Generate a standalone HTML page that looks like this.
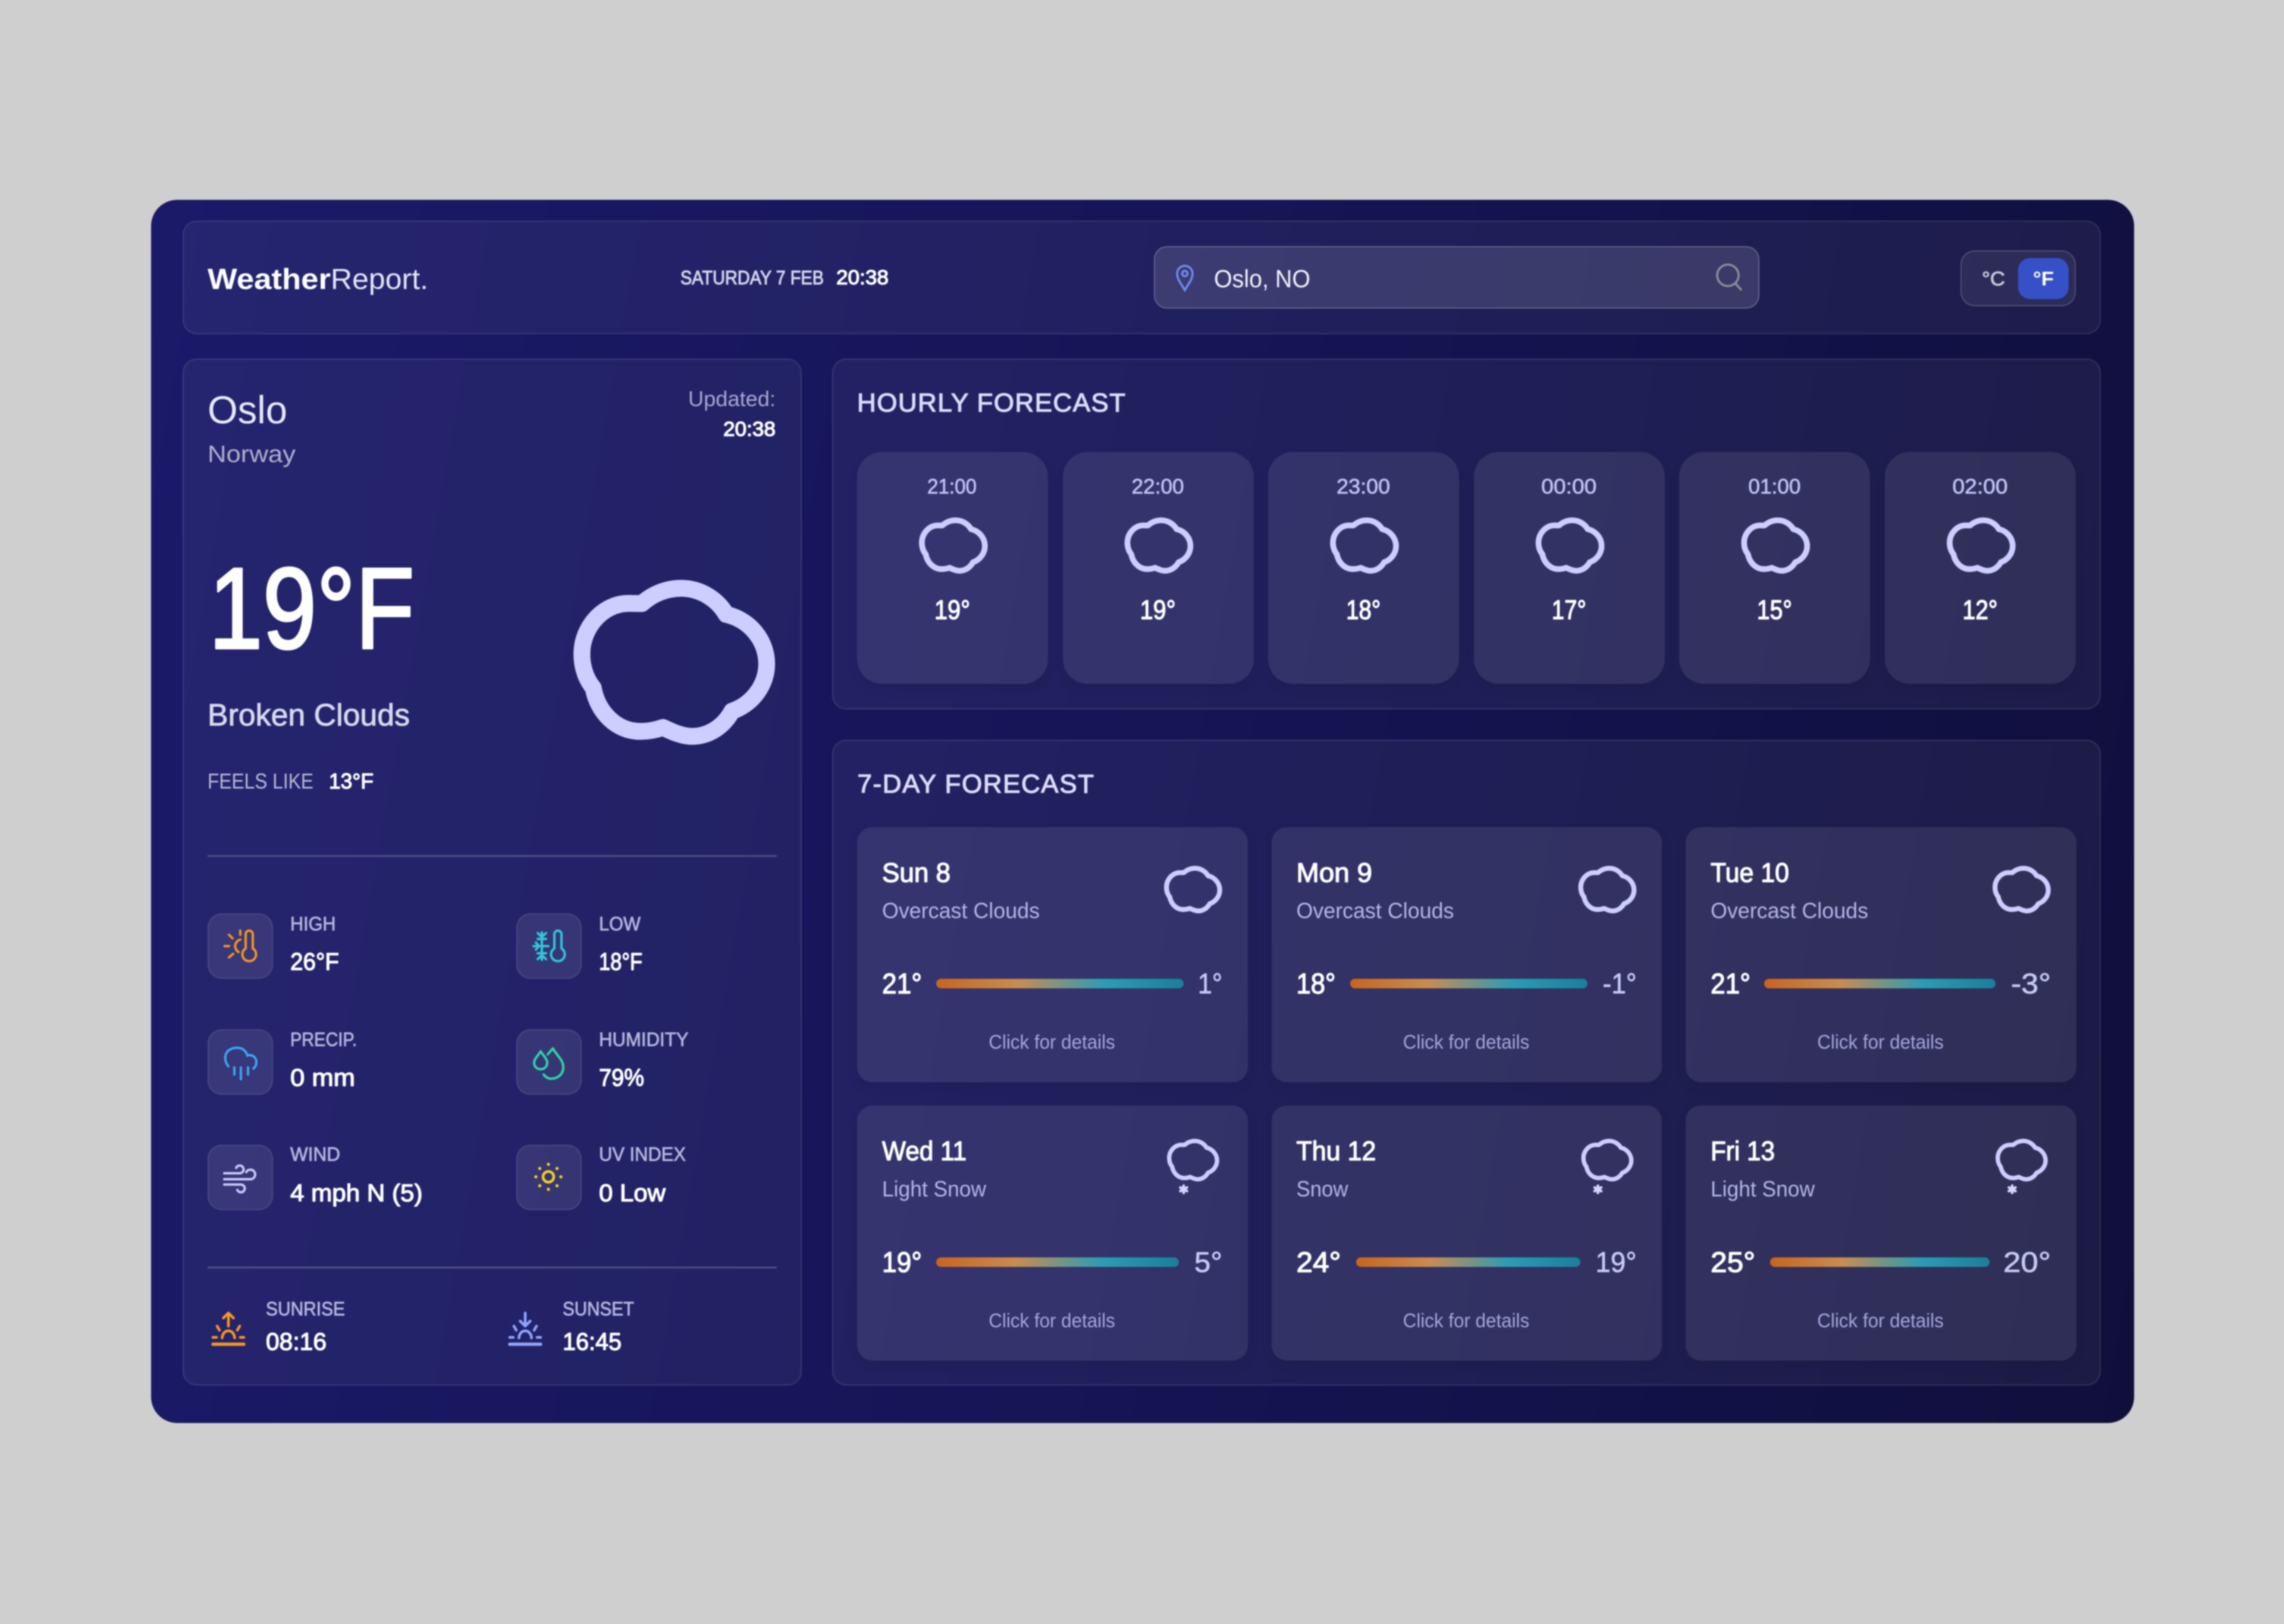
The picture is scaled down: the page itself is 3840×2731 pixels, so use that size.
<!DOCTYPE html>
<html lang="en"><head><meta charset="utf-8"><title>WeatherReport</title>
<style>
html,body{margin:0;padding:0;background:#cfcfcf;width:3840px;height:2731px;overflow:hidden}
#w{position:absolute;left:0;top:0;width:3840px;height:2731px;filter:blur(1px)}
.b{position:absolute;box-sizing:border-box}
#f{left:254px;top:336px;width:3334px;height:2057px;border-radius:44px;background:linear-gradient(100deg,#1a1a6a 0%,#161556 50%,#100f3c 100%)}
.c{background:rgba(255,255,255,.05);border:2px solid rgba(255,255,255,.1);border-radius:24px}
.t{background:rgba(255,255,255,.088);box-shadow:0 8px 20px rgba(0,0,0,.08)}
.h{top:760px;width:321px;height:390px;border-radius:42px}
.d{width:656.5px;height:429px;border-radius:26px}
.r1{top:1391px}.r2{top:1859px}
.i{width:110px;height:110px;border-radius:24px;background:rgba(255,255,255,.09);border:2px solid rgba(255,255,255,.09)}
svg{position:absolute;left:0;top:0}
text{font-family:"Liberation Sans",sans-serif}
.v{fill:#fff;stroke:#fff;stroke-width:1.4px;stroke-linejoin:round}
.k{fill:#b3b5de;font-size:32px;stroke:#b3b5de;stroke-width:.9px}
.vv{font-size:41px}
.nm{font-size:45px}
.ds{font-size:37px;fill:#b3b6e8}
.tp{font-size:48px}
.lo{font-size:48px;fill:#c6c9f5;stroke:#c6c9f5;stroke-width:.8px}
.cl{font-size:33px;fill:#a3a6dc}
.tm{font-size:35px;fill:#bfc2f5;stroke:#bfc2f5;stroke-width:.8px}
.ht{font-size:45px}
.hd{font-size:44px;fill:#dcdcfa;stroke:#dcdcfa;stroke-width:1.3px}
</style></head><body><div id="w">
<div class="b" id="f"></div>
<div class="b c" style="left:307px;top:371px;width:3225px;height:191px"></div>
<div class="b c" style="left:307px;top:603px;width:1041px;height:1727px"></div>
<div class="b c" style="left:1399px;top:603px;width:2133px;height:590px"></div>
<div class="b c" style="left:1399px;top:1244px;width:2133px;height:1086px"></div>
<div class="b" style="left:1940px;top:414px;width:1018px;height:105px;border-radius:22px;background:rgba(255,255,255,.12);border:2px solid rgba(255,255,255,.2)"></div>
<div class="b" style="left:3296px;top:421px;width:194px;height:94px;border-radius:24px;background:rgba(255,255,255,.07);border:2px solid rgba(255,255,255,.16)"></div>
<div class="b" style="left:3393px;top:434px;width:85px;height:69px;border-radius:20px;background:#3650c8"></div>
<div class="b t h" style="left:1441px"></div><div class="b t h" style="left:1786.6px"></div><div class="b t h" style="left:2132.2px"></div><div class="b t h" style="left:2477.8px"></div><div class="b t h" style="left:2823.4px"></div><div class="b t h" style="left:3169px"></div>
<div class="b t d r1" style="left:1441px"></div><div class="b t d r1" style="left:2137.5px"></div><div class="b t d r1" style="left:2834px"></div>
<div class="b t d r2" style="left:1441px"></div><div class="b t d r2" style="left:2137.5px"></div><div class="b t d r2" style="left:2834px"></div>
<div class="b" style="left:349px;top:1438px;width:957px;height:2.5px;background:rgba(255,255,255,.2)"></div>
<div class="b" style="left:349px;top:2130px;width:957px;height:2.5px;background:rgba(255,255,255,.2)"></div>
<div class="b i" style="left:349px;top:1536px"></div><div class="b i" style="left:868px;top:1536px"></div>
<div class="b i" style="left:349px;top:1731px"></div><div class="b i" style="left:868px;top:1731px"></div>
<div class="b i" style="left:349px;top:1925px"></div><div class="b i" style="left:868px;top:1925px"></div>

<svg width="3840" height="2731" viewBox="0 0 3840 2731" xmlns="http://www.w3.org/2000/svg">
<defs>
<linearGradient id="g" x1="0" y1="0" x2="1" y2="0"><stop offset="0" stop-color="#c8651f"/><stop offset=".33" stop-color="#c98c4f"/><stop offset=".68" stop-color="#2b9db3"/><stop offset="1" stop-color="#1b7f9a"/></linearGradient>
<path id="cl" fill="none" stroke="#cdceff" stroke-width="85" stroke-linejoin="round" d="M418 225C470 178 540 148 615 148C715 148 800 205 843 280C960 305 1047 410 1047 530C1047 640 970 735 872 768C830 845 755 895 670 895C620 895 570 872 524 850C490 862 450 870 410 870C290 870 195 775 172 650C135 605 115 545 115 480C115 340 225 224 350 224C372 224 395 225 418 225Z"/>
<g id="st" stroke="#d5d6ff" stroke-width="4.600" stroke-linecap="round"><path d="M0-6V6M-5.500-3L5.500 3M-5.500 3L5.500-3"/></g>
</defs>

<!-- header -->
<text x="349" y="486" font-size="49" font-weight="700" fill="#fff" textLength="207" lengthAdjust="spacingAndGlyphs">Weather</text>
<text x="556" y="486" font-size="49" fill="#e4e5f8" textLength="164" lengthAdjust="spacingAndGlyphs">Report.</text>
<text x="1144" y="478" fill="#d2d3ea" stroke="#d2d3ea" stroke-width="1.2" font-size="32" textLength="241" lengthAdjust="spacingAndGlyphs">SATURDAY 7 FEB</text>
<text x="1406" y="478" font-size="34" class="v" textLength="88" lengthAdjust="spacingAndGlyphs">20:38</text>
<text x="2041" y="483" font-size="42" fill="#f2f2fa" textLength="162" lengthAdjust="spacingAndGlyphs">Oslo, NO</text>
<text x="3332" y="480" font-size="33" fill="#c9c9d6" stroke="#c9c9d6" stroke-width="1" textLength="39" lengthAdjust="spacingAndGlyphs">°C</text>
<text x="3418" y="480" font-size="33" font-weight="700" fill="#fff" textLength="35" lengthAdjust="spacingAndGlyphs">°F</text>
<path d="M1992 488C1986 477 1979 470 1979 460a13 13 0 0 1 26 0C2005 470 1998 477 1992 488Z" fill="none" stroke="#6e8cf5" stroke-width="3.500"/><circle cx="1992" cy="460" r="4.500" fill="none" stroke="#6e8cf5" stroke-width="3.500"/>
<circle cx="2905" cy="463" r="18" fill="none" stroke="#8d8d98" stroke-width="3.600"/><path d="M2918 477L2927 487" stroke="#8d8d98" stroke-width="3.600" stroke-linecap="round"/>

<!-- left card -->
<text x="349" y="712" font-size="66" fill="#e8e9fb" textLength="134" lengthAdjust="spacingAndGlyphs">Oslo</text>
<text x="349" y="777" font-size="40" fill="#b0b1cf" textLength="148" lengthAdjust="spacingAndGlyphs">Norway</text>
<text x="1304" y="683" font-size="36" fill="#a9a9cc" text-anchor="end" textLength="147" lengthAdjust="spacingAndGlyphs">Updated:</text>
<text x="1304" y="733" font-size="34" class="v" text-anchor="end" textLength="88" lengthAdjust="spacingAndGlyphs">20:38</text>
<text x="351" y="1090" font-size="194" fill="#fff" stroke="#fff" stroke-width="4" stroke-linejoin="round" textLength="346" lengthAdjust="spacingAndGlyphs">19°F</text>
<text x="349" y="1220" font-size="52" fill="#d8d9ee" stroke="#d8d9ee" stroke-width="1" textLength="340" lengthAdjust="spacingAndGlyphs">Broken Clouds</text>
<text x="349" y="1326" font-size="36" fill="#b8b9d6" textLength="178" lengthAdjust="spacingAndGlyphs">FEELS LIKE</text>
<text x="553" y="1326" font-size="36" class="v" textLength="75" lengthAdjust="spacingAndGlyphs">13°F</text>
<use href="#cl" transform="translate(940 940) scale(.3333)"/>

<text x="488" y="1564.5" class="k" textLength="76.5" lengthAdjust="spacingAndGlyphs">HIGH</text>
<text x="488" y="1631" class="v vv" textLength="82" lengthAdjust="spacingAndGlyphs">26°F</text>
<text x="1007" y="1564.5" class="k" textLength="70" lengthAdjust="spacingAndGlyphs">LOW</text>
<text x="1007" y="1631" class="v vv" textLength="73" lengthAdjust="spacingAndGlyphs">18°F</text>
<text x="488" y="1759" class="k" textLength="112" lengthAdjust="spacingAndGlyphs">PRECIP.</text>
<text x="488" y="1826" class="v vv" textLength="109" lengthAdjust="spacingAndGlyphs">0 mm</text>
<text x="1007" y="1759" class="k" textLength="150.5" lengthAdjust="spacingAndGlyphs">HUMIDITY</text>
<text x="1007" y="1826" class="v vv" textLength="76" lengthAdjust="spacingAndGlyphs">79%</text>
<text x="488" y="1952" class="k" textLength="84" lengthAdjust="spacingAndGlyphs">WIND</text>
<text x="488" y="2020" class="v vv" textLength="222.5" lengthAdjust="spacingAndGlyphs">4 mph N (5)</text>
<text x="1007" y="1952" class="k" textLength="146" lengthAdjust="spacingAndGlyphs">UV INDEX</text>
<text x="1007" y="2020" class="v vv" textLength="112" lengthAdjust="spacingAndGlyphs">0 Low</text>
<text x="447" y="2212" class="k" textLength="133" lengthAdjust="spacingAndGlyphs">SUNRISE</text>
<text x="447" y="2270" class="v vv" textLength="102" lengthAdjust="spacingAndGlyphs">08:16</text>
<text x="946" y="2212" class="k" textLength="120" lengthAdjust="spacingAndGlyphs">SUNSET</text>
<text x="946" y="2270" class="v vv" textLength="99" lengthAdjust="spacingAndGlyphs">16:45</text>

<!-- high icon -->
<g fill="none" stroke="#f7941d" stroke-width="4" stroke-linecap="round">
<path d="M413 1595V1571a6 6 0 0 1 12 0V1595a11.500 11.500 0 1 1-12 0Z"/>
<path d="M404 1565V1572M385 1572L391 1578M377.500 1591H385M385 1610L392 1604M404 1580A11.500 11.500 0 0 0 401 1601"/>
</g>
<!-- low icon -->
<g fill="none" stroke="#2fc8dc" stroke-width="4" stroke-linecap="round" stroke-linejoin="round">
<path d="M932 1595V1571a6 6 0 0 1 12 0V1595a11.500 11.500 0 1 1-12 0Z"/>
<path d="M911 1568V1614M897 1591H922M904 1569L911 1576L918 1569M904 1613L911 1606L918 1613M901 1585L906 1591L901 1597M904 1579L918 1579M904 1603L918 1603"/>
</g>
<!-- precip -->
<g fill="none" stroke="#3aa7f5" stroke-width="4" stroke-linecap="round">
<path d="M384 1793C375 1783 376 1762 399 1762C408 1762 414 1768 416 1775C425 1772 432 1780 431 1787C431 1791 429 1795 426 1797"/>
<path d="M394 1795V1807M405 1795V1815M417 1795V1807"/>
</g>
<!-- humidity -->
<g fill="none" stroke="#2fd6a5" stroke-width="4" stroke-linecap="round" stroke-linejoin="round">
<path d="M909 1768C904 1776 898 1781 898 1787C898 1794 903 1798 909 1798C915 1798 920 1794 920 1787C920 1781 914 1776 909 1768Z"/>
<path d="M921 1773L929.500 1763C936 1775 947 1782 947 1795C947 1806 938 1814 927 1814C921 1814 917 1811 914 1807"/>
</g>
<!-- wind -->
<g fill="none" stroke="#c8cbf8" stroke-width="4" stroke-linecap="round">
<path d="M377 1973H403a6.500 6.500 0 1 0-6-9"/>
<path d="M377 1983H421a8 8 0 1 0-7-12"/>
<path d="M377 1992H405a6.500 6.500 0 1 1-6 9"/>
</g>
<!-- uv -->
<circle cx="922" cy="1979" r="9" fill="none" stroke="#f5d020" stroke-width="4.500"/>
<g fill="#f5d020"><circle cx="922" cy="1958" r="2.700"/><circle cx="922" cy="2000" r="2.700"/><circle cx="901" cy="1979" r="2.700"/><circle cx="943" cy="1979" r="2.700"/><circle cx="907.500" cy="1965" r="2.700"/><circle cx="936.500" cy="1965" r="2.700"/><circle cx="907.500" cy="1994" r="2.700"/><circle cx="936.500" cy="1994" r="2.700"/></g>
<!-- sunrise -->
<g fill="none" stroke="#f7981f" stroke-width="4.500" stroke-linecap="round" stroke-linejoin="round">
<path d="M384 2230V2208M375.500 2216.500L384 2208L392.500 2216.500"/>
<path d="M365 2230L369 2237M403 2230L399 2237M358 2249H364M404 2249H410M373.500 2250C374 2242 379 2238 384 2238C389 2238 394 2242 394.500 2250"/>
<path d="M358 2260.500H410" stroke-width="5.500"/>
</g>
<!-- sunset -->
<g fill="none" stroke="#8ea4ff" stroke-width="4.500" stroke-linecap="round" stroke-linejoin="round">
<path d="M883 2208V2230M874.500 2221.500L883 2230L891.500 2221.500"/>
<path d="M864 2230L868 2237M902 2230L898 2237M857 2249H863M903 2249H909M872.500 2250C873 2242 878 2238 883 2238C888 2238 893 2242 893.500 2250"/>
<path d="M857 2260.500H909" stroke-width="5.500"/>
</g>

<!-- hourly -->
<text x="1441" y="692" class="hd" textLength="451" lengthAdjust="spacing">HOURLY FORECAST</text>
<text x="1600.500" y="830" class="tm" text-anchor="middle" textLength="83" lengthAdjust="spacingAndGlyphs">21:00</text>
<text x="1946.600" y="830" class="tm" text-anchor="middle" textLength="88" lengthAdjust="spacingAndGlyphs">22:00</text>
<text x="2292.200" y="830" class="tm" text-anchor="middle" textLength="90" lengthAdjust="spacingAndGlyphs">23:00</text>
<text x="2637.800" y="830" class="tm" text-anchor="middle" textLength="93" lengthAdjust="spacingAndGlyphs">00:00</text>
<text x="2983.400" y="830" class="tm" text-anchor="middle" textLength="88" lengthAdjust="spacingAndGlyphs">01:00</text>
<text x="3329" y="830" class="tm" text-anchor="middle" textLength="93" lengthAdjust="spacingAndGlyphs">02:00</text>
<use href="#cl" transform="translate(1536.800 858.100) scale(.1137)"/>
<use href="#cl" transform="translate(1882.400 858.100) scale(.1137)"/>
<use href="#cl" transform="translate(2228 858.100) scale(.1137)"/>
<use href="#cl" transform="translate(2573.600 858.100) scale(.1137)"/>
<use href="#cl" transform="translate(2919.200 858.100) scale(.1137)"/>
<use href="#cl" transform="translate(3264.800 858.100) scale(.1137)"/>
<text x="1601" y="1041" class="v ht" text-anchor="middle" textLength="60" lengthAdjust="spacingAndGlyphs">19°</text>
<text x="1946.600" y="1041" class="v ht" text-anchor="middle" textLength="60" lengthAdjust="spacingAndGlyphs">19°</text>
<text x="2292.200" y="1041" class="v ht" text-anchor="middle" textLength="58" lengthAdjust="spacingAndGlyphs">18°</text>
<text x="2637.800" y="1041" class="v ht" text-anchor="middle" textLength="58" lengthAdjust="spacingAndGlyphs">17°</text>
<text x="2983.400" y="1041" class="v ht" text-anchor="middle" textLength="59" lengthAdjust="spacingAndGlyphs">15°</text>
<text x="3329" y="1041" class="v ht" text-anchor="middle" textLength="59" lengthAdjust="spacingAndGlyphs">12°</text>

<!-- 7-day -->
<text x="1441.500" y="1333" class="hd" textLength="397.500" lengthAdjust="spacing">7-DAY FORECAST</text>

<text x="1483" y="1483" class="v nm" textLength="115" lengthAdjust="spacingAndGlyphs">Sun 8</text>
<text x="1483" y="1544" class="ds" textLength="265" lengthAdjust="spacingAndGlyphs">Overcast Clouds</text>
<text x="1483" y="1670.500" class="v tp" textLength="67" lengthAdjust="spacingAndGlyphs">21°</text>
<rect x="1574" y="1646" width="416" height="16" rx="8" fill="url(#g)"/>
<text x="2055" y="1670.500" class="lo" text-anchor="end" textLength="41" lengthAdjust="spacingAndGlyphs">1°</text>
<text x="1768.500" y="1763.500" class="cl" text-anchor="middle" textLength="212.500" lengthAdjust="spacingAndGlyphs">Click for details</text>
<use href="#cl" transform="translate(1950.100 1445.900) scale(.0961)"/>

<text x="2179.500" y="1483" class="v nm" textLength="127.500" lengthAdjust="spacingAndGlyphs">Mon 9</text>
<text x="2179.500" y="1544" class="ds" textLength="265" lengthAdjust="spacingAndGlyphs">Overcast Clouds</text>
<text x="2179.500" y="1670.500" class="v tp" textLength="66" lengthAdjust="spacingAndGlyphs">18°</text>
<rect x="2270" y="1646" width="399" height="16" rx="8" fill="url(#g)"/>
<text x="2751.500" y="1670.500" class="lo" text-anchor="end" textLength="57" lengthAdjust="spacingAndGlyphs">-1°</text>
<text x="2465" y="1763.500" class="cl" text-anchor="middle" textLength="212.500" lengthAdjust="spacingAndGlyphs">Click for details</text>
<use href="#cl" transform="translate(2646.600 1445.900) scale(.0961)"/>

<text x="2876" y="1483" class="v nm" textLength="132" lengthAdjust="spacingAndGlyphs">Tue 10</text>
<text x="2876" y="1544" class="ds" textLength="265" lengthAdjust="spacingAndGlyphs">Overcast Clouds</text>
<text x="2876" y="1670.500" class="v tp" textLength="67" lengthAdjust="spacingAndGlyphs">21°</text>
<rect x="2966" y="1646" width="389" height="16" rx="8" fill="url(#g)"/>
<text x="3448" y="1670.500" class="lo" text-anchor="end" textLength="67" lengthAdjust="spacingAndGlyphs">-3°</text>
<text x="3161.500" y="1763.500" class="cl" text-anchor="middle" textLength="212.500" lengthAdjust="spacingAndGlyphs">Click for details</text>
<use href="#cl" transform="translate(3343.100 1445.900) scale(.0961)"/>

<text x="1483" y="1951" class="v nm" textLength="142" lengthAdjust="spacingAndGlyphs">Wed 11</text>
<text x="1483" y="2012" class="ds" textLength="175" lengthAdjust="spacingAndGlyphs">Light Snow</text>
<text x="1483" y="2139" class="v tp" textLength="67" lengthAdjust="spacingAndGlyphs">19°</text>
<rect x="1574" y="2114.500" width="408" height="16" rx="8" fill="url(#g)"/>
<text x="2055" y="2139" class="lo" text-anchor="end" textLength="47" lengthAdjust="spacingAndGlyphs">5°</text>
<text x="1768.500" y="2232" class="cl" text-anchor="middle" textLength="212.500" lengthAdjust="spacingAndGlyphs">Click for details</text>
<use href="#cl" transform="translate(1955.800 1905.900) scale(.0863)"/>
<use href="#st" transform="translate(1990 2000)"/>

<text x="2179.500" y="1951" class="v nm" textLength="134" lengthAdjust="spacingAndGlyphs">Thu 12</text>
<text x="2179.500" y="2012" class="ds" textLength="87" lengthAdjust="spacingAndGlyphs">Snow</text>
<text x="2179.500" y="2139" class="v tp" textLength="75" lengthAdjust="spacingAndGlyphs">24°</text>
<rect x="2280" y="2114.500" width="377" height="16" rx="8" fill="url(#g)"/>
<text x="2751.500" y="2139" class="lo" text-anchor="end" textLength="69" lengthAdjust="spacingAndGlyphs">19°</text>
<text x="2465" y="2232" class="cl" text-anchor="middle" textLength="212.500" lengthAdjust="spacingAndGlyphs">Click for details</text>
<use href="#cl" transform="translate(2652.300 1905.900) scale(.0863)"/>
<use href="#st" transform="translate(2686.500 2000)"/>

<text x="2876" y="1951" class="v nm" textLength="108" lengthAdjust="spacingAndGlyphs">Fri 13</text>
<text x="2876" y="2012" class="ds" textLength="175" lengthAdjust="spacingAndGlyphs">Light Snow</text>
<text x="2876" y="2139" class="v tp" textLength="75" lengthAdjust="spacingAndGlyphs">25°</text>
<rect x="2976" y="2114.500" width="369" height="16" rx="8" fill="url(#g)"/>
<text x="3448" y="2139" class="lo" text-anchor="end" textLength="80" lengthAdjust="spacingAndGlyphs">20°</text>
<text x="3161.500" y="2232" class="cl" text-anchor="middle" textLength="212.500" lengthAdjust="spacingAndGlyphs">Click for details</text>
<use href="#cl" transform="translate(3348.800 1905.900) scale(.0863)"/>
<use href="#st" transform="translate(3383 2000)"/>
</svg>
</div></body></html>
